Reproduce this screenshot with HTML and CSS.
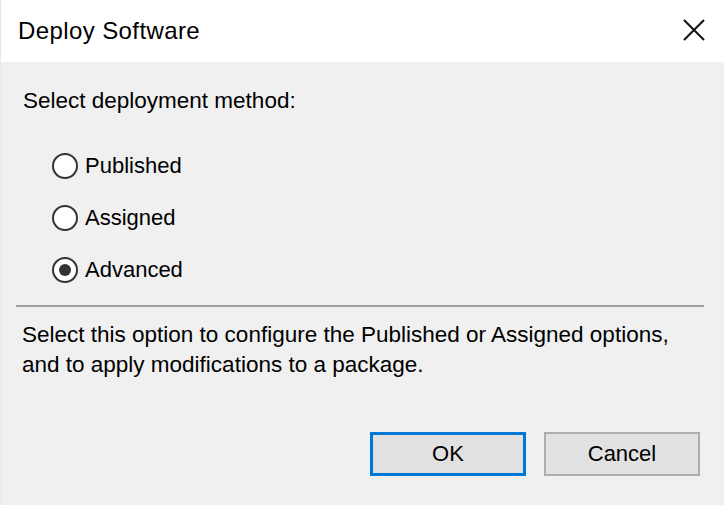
FILE: index.html
```html
<!DOCTYPE html>
<html>
<head>
<meta charset="utf-8">
<title>Deploy Software</title>
<link rel="stylesheet" href="styles.css">
</head>
<body>
<div class="dialog">
  <div class="titlebar">
    <span class="title">Deploy Software</span>
    <span class="close">
      <svg width="22" height="22" viewBox="0 0 22 22"><path d="M1 1 L21 21 M21 1 L1 21" stroke="#111" stroke-width="2" fill="none"/></svg>
    </span>
  </div>
  <div class="body">
    <div class="heading">Select deployment method:</div>
    <div class="options">
      <label class="option"><span class="radio"></span><span>Published</span></label>
      <label class="option"><span class="radio"></span><span>Assigned</span></label>
      <label class="option"><span class="radio checked"></span><span>Advanced</span></label>
    </div>
    <div class="separator"></div>
    <div class="description">Select this option to configure the Published or Assigned options,<br>and to apply modifications to a package.</div>
    <div class="buttons">
      <button class="btn default">OK</button>
      <button class="btn">Cancel</button>
    </div>
  </div>
</div>
</body>
</html>
```
FILE: styles.css
```css
html, body {
  margin: 0;
  padding: 0;
}
body {
  width: 724px;
  height: 505px;
  overflow: hidden;
  font-family: "Liberation Sans", Arial, sans-serif;
  color: #000;
  background: #f0f0f0;
}
.dialog {
  display: flex;
  flex-direction: column;
  height: 505px;
  border-left: 1px solid #e2ebf5;
}
.titlebar {
  height: 62px;
  background: #fff;
  display: flex;
  align-items: center;
  justify-content: space-between;
  padding: 0 19px 0 17px;
  flex-shrink: 0;
}
.title {
  font-size: 24px;
  letter-spacing: 0.4px;
  color: #000;
}
.close {
  display: flex;
  align-items: center;
  width: 22px;
  height: 22px;
  margin-top: -2px;
}
.body {
  flex: 1;
  background: #f0f0f0;
  padding: 26px 20px 0 15px;
  font-size: 22px;
}
.heading {
  font-size: 22.5px;
  line-height: 26px;
  padding-left: 7px;
}
.options {
  display: flex;
  flex-direction: column;
  margin-top: 26px;
  padding-left: 36px;
}
.option {
  display: flex;
  align-items: center;
  height: 52px;
  gap: 7px;
  line-height: 26px;
}
.radio {
  width: 26px;
  height: 26px;
  box-sizing: border-box;
  border: 2px solid #333;
  border-radius: 50%;
  background: #fff;
  display: flex;
  align-items: center;
  justify-content: center;
}
.radio.checked::after {
  content: "";
  width: 12px;
  height: 12px;
  border-radius: 50%;
  background: #333;
}
.separator {
  margin-top: 9px;
  border-top: 2px solid #a0a0a0;
}
.description {
  font-size: 22.5px;
  margin-top: 13px;
  padding-left: 6px;
  line-height: 30px;
}
.buttons {
  display: flex;
  justify-content: flex-end;
  gap: 18px;
  margin-top: 52px;
  padding-right: 4px;
}
.btn {
  width: 156px;
  height: 44px;
  box-sizing: border-box;
  background: #e1e1e1;
  border: 2px solid #adadad;
  font-family: "Liberation Sans", Arial, sans-serif;
  font-size: 22px;
  color: #000;
  padding: 0;
}
.btn.default {
  border: 3px solid #0078d7;
}
```
